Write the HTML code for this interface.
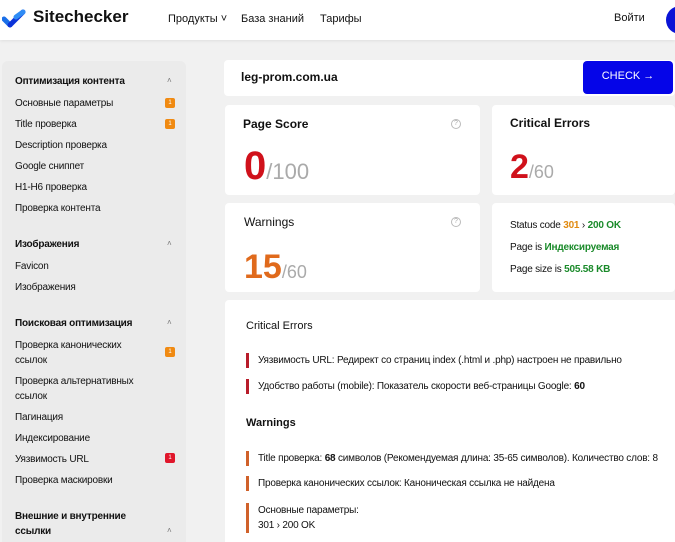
<!DOCTYPE html>
<html><head><meta charset="utf-8"><style>
*{margin:0;padding:0;box-sizing:border-box}
body{width:675px;height:542px;overflow:hidden;background:#f1f1f1;font-family:"Liberation Sans","Noto Sans CJK SC",sans-serif;color:#111;position:relative}
.abs{position:absolute}
.hdr{left:0;top:0;width:675px;height:40px;background:#fff;box-shadow:0 1px 3px rgba(0,0,0,.08)}
.side{left:2px;top:61px;width:184px;height:481px;background:#ebebeb;border-radius:6px 6px 0 0}
.si{position:absolute;left:13px;font-size:10px;letter-spacing:-.2px;line-height:15px}
.sh{font-weight:bold}
.car{position:absolute;left:165px;font-size:8px;color:#777}
.bd{position:absolute;left:163px;width:10px;height:10px;border-radius:2px;background:#f08a12;color:#fff;font-size:6px;text-align:center;line-height:10px}
.card{position:absolute;background:#fff;border-radius:4px}
.t{font-size:12px;font-weight:bold;position:absolute}
.q{position:absolute;width:10px;height:10px;border:1px solid #bbb;border-radius:50%;font-size:7px;color:#aaa;text-align:center;line-height:8px}
.big{position:absolute;font-weight:bold;font-size:40px;line-height:40px}
.big span{font-size:22px;color:#aaa;font-weight:normal}
.li{position:absolute;left:21px;font-size:10px;letter-spacing:-.2px;line-height:15px;border-left:3px solid #b81c2a;padding-left:9px}
.li.w{border-color:#d0612a}
</style></head><body>
<div class="abs hdr">
<svg class="abs" style="left:2px;top:8px" width="24" height="20" viewBox="0 0 24 20"><path d="M2 11 L8 17" stroke="#1a6fe8" stroke-width="5" stroke-linecap="round"/><path d="M8 17 L21 4" stroke="#0b33d9" stroke-width="5" stroke-linecap="round"/><path d="M14 9 L21 4" stroke="#2f8cf5" stroke-width="5" stroke-linecap="round"/></svg>
<div class="abs" style="left:33px;top:7px;font-size:17px;font-weight:bold;color:#111">Sitechecker</div>
<div class="abs" style="left:168px;top:13px;font-size:11px">Продукты ˅</div>
<div class="abs" style="left:241px;top:13px;font-size:11px">База знаний</div>
<div class="abs" style="left:320px;top:13px;font-size:11px">Тарифы</div>
<div class="abs" style="left:614px;top:12px;font-size:11px">Войти</div>
<div class="abs" style="left:666px;top:6px;width:28px;height:28px;border-radius:50%;background:#0a14d6"></div>
</div>
<div class="abs side">
<div class="si sh" style="top:13px">Оптимизация контента</div><div class="car" style="top:15px">˄</div>
<div class="si" style="top:35px">Основные параметры</div><div class="bd" style="top:37px">1</div>
<div class="si" style="top:56px">Title проверка</div><div class="bd" style="top:58px">1</div>
<div class="si" style="top:77px">Description проверка</div>
<div class="si" style="top:98px">Google сниппет</div>
<div class="si" style="top:119px">H1-H6 проверка</div>
<div class="si" style="top:140px">Проверка контента</div>
<div class="si sh" style="top:176px">Изображения</div><div class="car" style="top:178px">˄</div>
<div class="si" style="top:198px">Favicon</div>
<div class="si" style="top:219px">Изображения</div>
<div class="si sh" style="top:255px">Поисковая оптимизация</div><div class="car" style="top:257px">˄</div>
<div class="si" style="top:277px">Проверка канонических<br>ссылок</div><div class="bd" style="top:286px">1</div>
<div class="si" style="top:313px">Проверка альтернативных<br>ссылок</div>
<div class="si" style="top:349px">Пагинация</div>
<div class="si" style="top:370px">Индексирование</div>
<div class="si" style="top:391px">Уязвимость URL</div><div class="bd" style="top:392px;background:#e0162b">1</div>
<div class="si" style="top:412px">Проверка маскировки</div>
<div class="si sh" style="top:448px">Внешние и внутренние<br>ссылки</div><div class="car" style="top:465px">˄</div>
</div>
<div class="card" style="left:224px;top:60px;width:451px;height:36px"></div>
<div class="abs" style="left:241px;top:70px;font-size:12px;font-weight:bold">leg-prom.com.ua</div>
<div class="abs" style="left:583px;top:61px;width:90px;height:33px;background:#0505e8;border-radius:4px;color:#fff;font-size:11px;text-align:center;line-height:30px">CHECK →</div>

<div class="card" style="left:225px;top:105px;width:255px;height:90px"></div>
<div class="t" style="left:243px;top:117px">Page Score</div><div class="q" style="left:451px;top:119px">?</div>
<div class="big" style="left:244px;top:146px;color:#d0111b">0<span>/100</span></div>
<div class="card" style="left:492px;top:105px;width:183px;height:90px"></div>
<div class="t" style="left:510px;top:116px">Critical Errors</div>
<div class="big" style="left:510px;top:150px;color:#d0111b;font-size:34px;line-height:34px">2<span style="font-size:18px">/60</span></div>

<div class="card" style="left:225px;top:203px;width:255px;height:89px"></div>
<div class="t" style="left:244px;top:215px;font-weight:normal">Warnings</div><div class="q" style="left:451px;top:217px">?</div>
<div class="big" style="left:244px;top:250px;color:#e06a1c;font-size:34px;line-height:34px">15<span style="font-size:18px">/60</span></div>
<div class="card" style="left:492px;top:203px;width:183px;height:89px"></div>
<div class="abs" style="left:510px;top:220px;font-size:10px;letter-spacing:-.2px">Status code <b style="color:#e08a10">301</b> › <b style="color:#1a8a2a">200 OK</b></div>
<div class="abs" style="left:510px;top:242px;font-size:10px;letter-spacing:-.2px">Page is <b style="color:#1a8a2a">Индексируемая</b></div>
<div class="abs" style="left:510px;top:264px;font-size:10px;letter-spacing:-.2px">Page size is <b style="color:#1a8a2a">505.58 KB</b></div>

<div class="card" style="left:225px;top:300px;width:450px;height:242px;border-radius:4px 0 0 0"></div>
<div class="abs" style="left:246px;top:320px;font-size:11px">Critical Errors</div>
<div class="li abs" style="left:246px;top:353px">Уязвимость URL: Редирект со страниц index (.html и .php) настроен не правильно</div>
<div class="li abs" style="left:246px;top:379px">Удобство работы (mobile): Показатель скорости веб-страницы Google: <b>60</b></div>
<div class="abs" style="left:246px;top:417px;font-size:11px;font-weight:bold">Warnings</div>
<div class="li w abs" style="left:246px;top:451px;white-space:nowrap">Title проверка: <b>68</b> символов (Рекомендуемая длина: 35-65 символов). Количество слов: 8</div>
<div class="li w abs" style="left:246px;top:476px">Проверка канонических ссылок: Каноническая ссылка не найдена</div>
<div class="li w abs" style="left:246px;top:503px">Основные параметры:<br>301 › 200 OK</div>
</body></html>
